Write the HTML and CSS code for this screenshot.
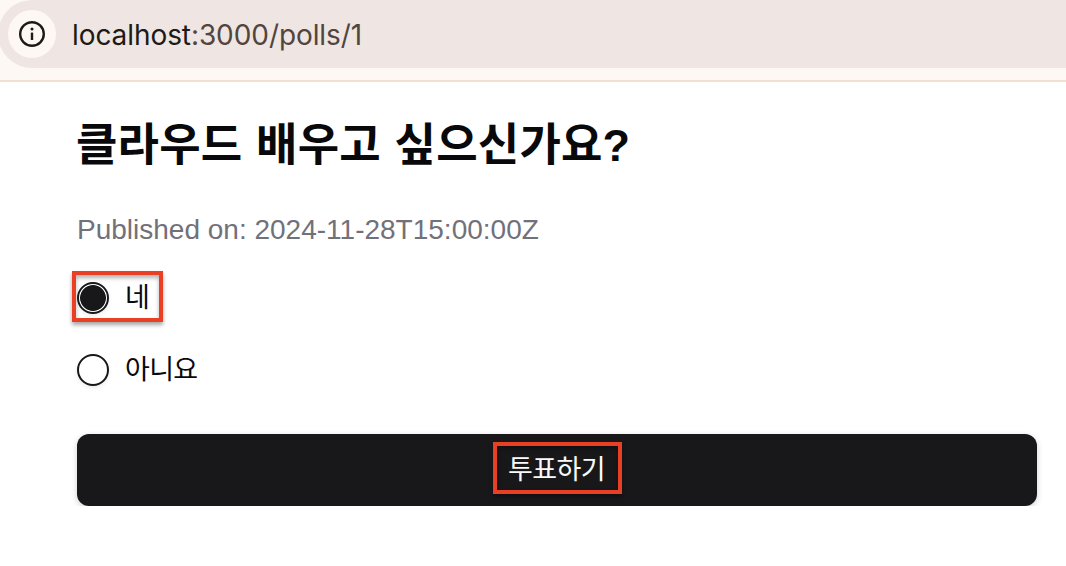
FILE: index.html
```html
<!DOCTYPE html>
<html lang="ko">

<head>
  <meta charset="utf-8">
  <title>Polls</title>
  <link rel="stylesheet" href="styles.css">
</head>

<body>
  <header class="toolbar">
    <div class="address-bar">
      <span class="site-info">
        <svg width="28" height="28" viewBox="0 0 28 28" fill="none">
          <circle cx="14" cy="14" r="11.8" stroke="#201a17" stroke-width="2.4" />
          <path d="M14 12.6v7.4" stroke="#201a17" stroke-width="2.4" />
          <circle cx="14" cy="9" r="1.5" fill="#201a17" />
        </svg>
      </span>
      <span class="url"><span class="host">localhost</span>:3000/polls/1</span>
    </div>
  </header>

  <main class="poll">
    <h1 class="question">클라우드 배우고 싶으신가요?</h1>
    <p class="published">Published on: 2024-11-28T15:00:00Z</p>
    <form class="poll-form">
      <label class="choice choice-yes">
        <input class="radio" type="radio" name="choice" value="1" checked>
        <span class="choice-text">네</span>
        <span class="highlight"></span>
      </label>
      <label class="choice">
        <input class="radio" type="radio" name="choice" value="2">
        <span class="choice-text">아니요</span>
      </label>
      <button class="btn" type="button">
        <span class="btn-text">투표하기</span>
        <span class="highlight"></span>
      </button>
    </form>
  </main>
</body>

</html>
```

FILE: styles.css
```css
* {
    box-sizing: border-box;
}
body {
    margin: 0;
    background-color: #fff;
    color: #09090b;
    font-family: "Liberation Sans", "Noto Sans CJK KR", sans-serif;
    overflow: hidden;
}

/* browser toolbar */
.toolbar {
    height: 82px;
    background-color: #fdf8f4;
    border-bottom: 2px solid #f1dfd4;
}
.address-bar {
    display: flex;
    align-items: center;
    height: 68px;
    margin-left: -2px;
    padding-left: 10px;
    background-color: #efe6e3;
    border-radius: 34px 0 0 34px;
}
.site-info {
    display: flex;
    align-items: center;
    justify-content: center;
    width: 48px;
    height: 48px;
    border-radius: 50%;
    background-color: #fdf8f4;
}
.url {
    margin-left: 16px;
    padding-top: 1px;
    font-family: Inter, sans-serif;
    font-size: 28px;
    line-height: 34px;
    letter-spacing: -.08px;
    color: #51453d;
    white-space: nowrap;
}
.host {
    color: #201a17;
}

/* poll */
.poll {
    padding: 38px 29px 0 77px;
}
.question {
    height: 48px;
    margin: 0 0 0 -1px;
    font-size: 45px;
    font-weight: 700;
    line-height: 52px;
    letter-spacing: .2px;
    word-spacing: 1px;
    white-space: nowrap;
}
.published {
    margin: 42px 0 0;
    font-size: 28px;
    line-height: 40px;
    color: #71717a;
}
.poll-form {
    display: flex;
    flex-direction: column;
    margin-top: 32px;
}
.choice {
    display: flex;
    align-items: center;
    align-self: flex-start;
    position: relative;
    gap: 16px;
    height: 32px;
    margin-bottom: 40px;
}
.radio {
    -webkit-appearance: none;
    appearance: none;
    width: 32px;
    height: 32px;
    margin: 0;
    border: 2px solid #18181b;
    border-radius: 50%;
    background-color: #fff;
    box-shadow: 0 2px 4px rgba(0, 0, 0, .08);
}
.radio:checked {
    background: radial-gradient(circle, #18181b 12.5px, #fff 13.3px);
}
.choice-text {
    padding-bottom: 5px;
    font-family: "Noto Sans CJK KR", sans-serif;
    font-size: 27px;
    line-height: 32px;
    letter-spacing: -.7px;
}
.btn {
    display: flex;
    align-items: center;
    justify-content: center;
    position: relative;
    height: 72px;
    margin-top: 8px;
    padding: 0 1px 4px 0;
    border: none;
    border-radius: 12px;
    background-color: #18181b;
    color: #fafafa;
    font-family: "Noto Sans CJK KR", sans-serif;
    font-size: 27px;
    letter-spacing: -.6px;
    box-shadow: 0 2px 6px rgba(0, 0, 0, .18);
}
.btn-text {
    line-height: 40px;
}

/* red frames over the clickable parts */
.highlight {
    position: absolute;
    border: 4px solid #e94025;
    box-shadow: 0 3px 4px rgba(0, 0, 0, .35), inset 0 3px 4px rgba(0, 0, 0, .3);
}
.choice-yes .highlight {
    top: -11px;
    left: -5px;
    width: 91px;
    height: 51px;
}
.btn .highlight {
    top: 8px;
    left: 416px;
    width: 129px;
    height: 52px;
}
```
